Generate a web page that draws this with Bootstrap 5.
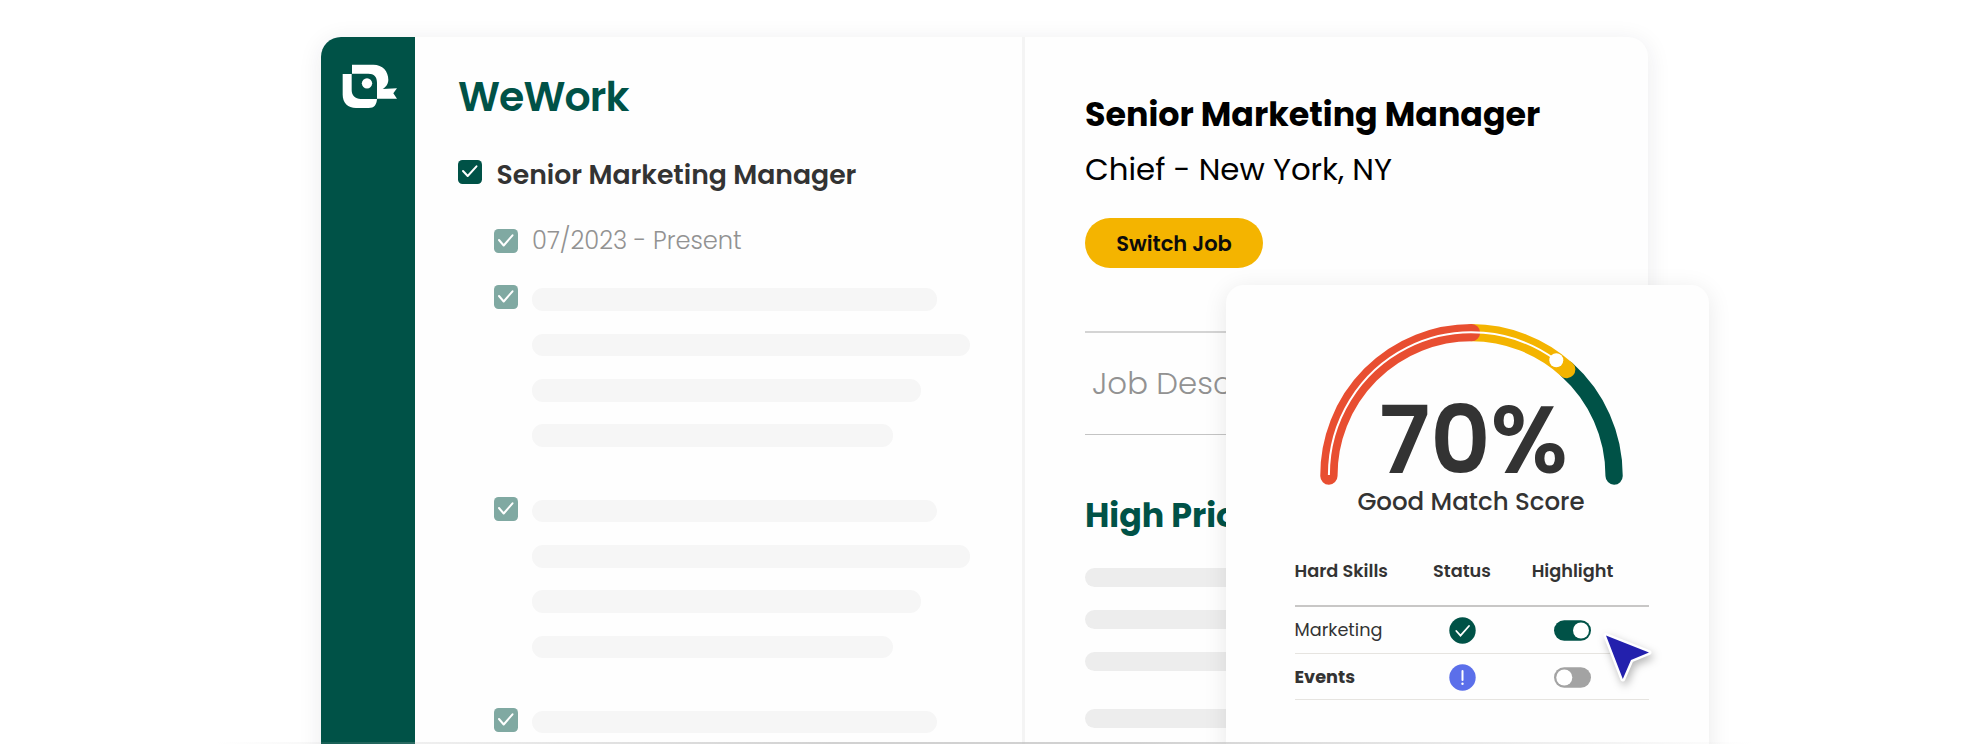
<!DOCTYPE html>
<html lang="en">
<head>
<meta charset="utf-8">
<title>Match score</title>
<link href="https://cdn.jsdelivr.net/npm/bootstrap@5.3.0/dist/css/bootstrap.min.css" rel="stylesheet">
<style>
:root{--green:#005247;--ink:#333;--muted:#929292}
body{font-family:Poppins,Inter,"Liberation Sans",sans-serif;background:#fff;color:var(--ink)}
.stage{height:744px}
.app-window{width:1327.5px;height:760px;margin:37px 0 0 320.5px;border-radius:20px;background:#fefefe;box-shadow:0 4px 24px rgba(30,30,60,.09)}
.side{width:94.5px;background:var(--green);border-radius:20px 0 0 0;padding:26.7px 0 0 21.5px}
.pane-left{width:610px;border-right:3px solid #f4f4f4;padding:36px 0 0 43px}
.pane-right{padding:58px 0 0 60px}
.brand{font-size:41px;line-height:48px;font-weight:600;letter-spacing:-.9px;color:var(--green)}
.role{font-size:26.7px;line-height:30px;font-weight:600}
.dates{font-size:24.2px;line-height:28px;font-weight:300;color:var(--muted)}
.tick{width:24px;height:24px;border-radius:4.5px;background:var(--green)}
.tick.soft{background:#80a9a2}
.tick path{fill:none;stroke:#fff;stroke-width:2;stroke-linecap:round;stroke-linejoin:round}
.row-role{margin-top:39px;gap:14.5px}
.row-sub{padding-left:36px;gap:14px}
.row-dates{margin-top:36.5px}
.groups{margin-top:30.8px;gap:49.4px}
.lines{padding-top:3px;gap:22.7px}
.line{height:22.7px;border-radius:11px;background:#f6f6f6}
.w1{width:404.5px}.w2{width:437.5px}.w3{width:389px}.w4{width:361px}
.job{font-size:33.3px;line-height:40px;font-weight:700;color:#000}
.place{font-size:30.8px;line-height:36px;color:#000;margin-top:17.3px}
.btn-switch{width:178px;height:50px;margin-top:29.7px;padding:2px 0 0;background:#f4b400;color:#0c0c0c;font-size:21px;font-weight:600}
.desc{margin-top:63px;height:104px;border-top:2px solid #d4d4d4;border-bottom:1.5px solid #c4c4c4;padding:2px 0 0 7px;font-size:30.8px;font-weight:300;color:var(--muted);width:480px}
.prio{margin-top:61px;font-size:33.3px;line-height:40px;font-weight:700;color:var(--green)}
.greys{margin-top:32px;gap:22.5px}
.greys div{height:19.5px;width:400px;border-radius:10px;background:#ededed}
.greys div:last-child{margin-top:15px}
.score{left:1226px;top:284.5px;width:483px;height:480px;border-radius:18px;background:#fefefe;box-shadow:0 4px 24px rgba(0,0,0,.09);padding:38.5px 0 0 68.5px}
.gauge{width:305px;height:163px;margin-left:24.5px}
.gauge svg{display:block}
.pct{left:60px;top:82px;font-size:93.4px;line-height:72px;font-weight:600}
.caption-text{font-size:24.5px;line-height:30px;font-weight:500;width:353px;padding-top:1px}
.skills{width:354.5px;margin-top:41.5px;font-size:17.7px}
.skill-row{display:grid;grid-template-columns:118px 99px 122px;align-items:center;border-bottom:1.4px solid #e6e4e0;height:46.7px;padding-top:1px}
.skill-row>:nth-child(n+2){justify-self:center}
.skill-head{height:48.5px;padding-top:0;align-items:start;line-height:24px;font-weight:600;border-bottom:2.5px solid #c8c7c6}
.pointer{left:1594px;top:626px;filter:drop-shadow(2px 4px 4px rgba(0,0,0,.28))}
.floor{left:215px;right:215px;bottom:0;height:2px;background:linear-gradient(90deg,rgba(190,190,190,0),rgba(190,190,190,.7) 40%,rgba(190,190,190,.7) 60%,rgba(190,190,190,0))}
</style>
</head>
<body>
<main class="stage position-relative overflow-hidden d-flex align-items-start">
  <div class="app-window d-flex flex-shrink-0">
    <aside class="side flex-shrink-0">
      <svg width="56" height="44.67" viewBox="36 26 168 134" fill="#fff"><path d="M66 28H130C158 28 175 48 175 73C175 85 168 95 158 101L201 99L190 114L201 130H141V82C141 64 132 55 115 55H66Z"/><path d="M38 56H65V104C65 120 76 131 92 131H141C140 148 133 158 116 158H78C54 158 38 142 38 118Z"/><circle cx="111" cy="84" r="15.5"/></svg>
    </aside>
    <section class="pane-left flex-shrink-0">
      <div class="brand">WeWork</div>
      <div class="row-role d-flex">
        <svg class="tick" viewBox="0 0 24 24"><path d="M5 11L9.7 16L18.5 6.3"/></svg>
        <div class="role text-nowrap">Senior Marketing Manager</div>
      </div>
      <div class="row-sub row-dates d-flex align-items-center">
        <svg class="tick soft" viewBox="0 0 24 24"><path d="M5 11L9.7 16.5L18.5 6.3"/></svg>
        <div class="dates">07/2023 - Present</div>
      </div>
      <div class="groups d-flex flex-column">
        <div class="row-sub d-flex"><svg class="tick soft" viewBox="0 0 24 24"><path d="M5 11L9.7 16.5L18.5 6.3"/></svg><div class="lines d-flex flex-column"><div class="line w1"></div><div class="line w2"></div><div class="line w3"></div><div class="line w4"></div></div></div>
        <div class="row-sub d-flex"><svg class="tick soft" viewBox="0 0 24 24"><path d="M5 11L9.7 16.5L18.5 6.3"/></svg><div class="lines d-flex flex-column"><div class="line w1"></div><div class="line w2"></div><div class="line w3"></div><div class="line w4"></div></div></div>
        <div class="row-sub d-flex"><svg class="tick soft" viewBox="0 0 24 24"><path d="M5 11L9.7 16.5L18.5 6.3"/></svg><div class="lines d-flex flex-column"><div class="line w1"></div></div></div>
      </div>
    </section>
    <section class="pane-right flex-grow-1">
      <div class="job text-nowrap">Senior Marketing Manager</div>
      <div class="place">Chief - New York, NY</div>
      <button class="btn btn-switch rounded-pill border-0 d-block">Switch Job</button>
      <div class="desc d-flex align-items-center">Job Desc</div>
      <div class="prio">High Prio</div>
      <div class="greys d-flex flex-column"><div></div><div></div><div></div><div></div></div>
    </section>
  </div>

  <div class="score position-absolute">
    <div class="gauge position-relative">
      <svg width="305" height="163" viewBox="1319 323 305 163" fill="none" stroke-width="17.3" stroke-linecap="round">
        <path stroke="#005247" d="M1566.7 369.5A142.6 142.6 0 0 1 1614.1 476"/>
        <path stroke="#f4b400" d="M1471.5 332.7A142.6 142.6 0 0 1 1566.7 369.5"/>
        <path stroke="#e84e31" d="M1328.9 476A142.6 142.6 0 0 1 1471.5 332.7"/>
        <path stroke="#fff" stroke-width="2" stroke-linecap="butt" d="M1328.9 475A142.6 142.6 0 0 1 1556.3 360.3"/>
        <circle cx="1556.3" cy="360.3" r="7" fill="#fff" stroke="none"/>
      </svg>
      <div class="pct position-absolute">70%</div>
    </div>
    <div class="caption-text text-center">Good Match Score</div>
    <div class="skills">
      <div class="skill-row skill-head"><span>Hard Skills</span><span>Status</span><span>Highlight</span></div>
      <div class="skill-row"><span>Marketing</span>
        <svg width="27" height="27" viewBox="0 0 27 27"><circle cx="13.5" cy="13.5" r="13.2" fill="#005247"/><path d="M7.3 14L11.5 18.7L20 9" fill="none" stroke="#fff" stroke-width="1.8" stroke-linecap="round"/></svg>
        <svg width="37" height="21" viewBox="0 0 37 21"><rect y=".3" width="37" height="20.4" rx="10.2" fill="#005247"/><circle cx="27" cy="10.5" r="8" fill="#fff"/></svg></div>
      <div class="skill-row"><span class="fw-bold">Events</span>
        <svg width="27" height="27" viewBox="0 0 27 27"><circle cx="13.5" cy="13.5" r="13.2" fill="#5b6fea"/><path d="M13.5 7V16" stroke="#fff" stroke-width="2" stroke-linecap="round"/><circle cx="13.5" cy="19.8" r="1.2" fill="#fff"/></svg>
        <svg width="37" height="21" viewBox="0 0 37 21"><rect y=".3" width="37" height="20.4" rx="10.2" fill="#a3a3a3"/><circle cx="10.3" cy="10.5" r="8" fill="#fff"/></svg></div>
    </div>
  </div>

  <svg class="pointer position-absolute" width="76" height="76" viewBox="1594 626 76 76"><path d="M1606 635.6L1649 652.5L1631 660L1622.8 679Z" fill="#2320ad" stroke="#fff" stroke-width="5" stroke-linejoin="round" paint-order="stroke"/></svg>
  <div class="floor position-absolute"></div>
</main>
<script src="https://cdn.jsdelivr.net/npm/bootstrap@5.3.0/dist/js/bootstrap.bundle.min.js"></script>
</body>
</html>
